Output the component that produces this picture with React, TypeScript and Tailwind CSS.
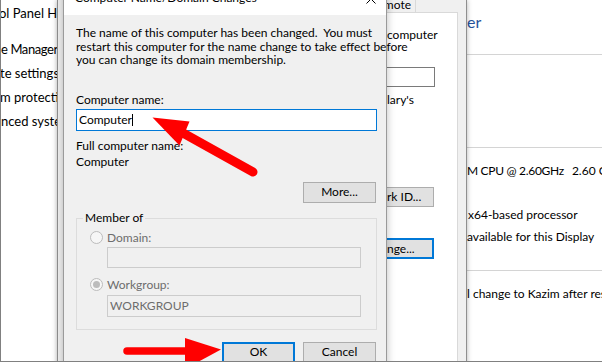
import React from "react";

function Radio({ checked = false }: { checked?: boolean }) {
  return (
    <span className="w-[13px] h-[13px] rounded-full border border-[#bcbcbc] bg-[#f6f6f6] flex items-center justify-center shrink-0">
      {checked && <span className="w-[7px] h-[7px] rounded-full bg-[#bcbcbc]" />}
    </span>
  );
}

function Arrows() {
  return (
    <svg
      className="absolute inset-0 pointer-events-none"
      width="602"
      height="362"
      viewBox="0 0 602 362"
    >
      <line x1="183" y1="133" x2="253" y2="172" stroke="#ff0000" strokeWidth="9" strokeLinecap="round" />
      <polygon points="152.5,117.5 189.5,121.5 179.5,145.5" fill="#ff0000" />
      <line x1="127" y1="351" x2="190" y2="351" stroke="#ff0000" strokeWidth="7.5" strokeLinecap="round" />
      <polygon points="185,338 221,349.5 185,369" fill="#ff0000" />
    </svg>
  );
}

export default function App() {
  return (
    <div className="relative w-[602px] h-[362px] overflow-hidden bg-white font-['Lato',sans-serif] text-[12px] text-black">
      {/* Background System window: left nav */}
      <div className="absolute left-0 top-0 w-[90px] flex flex-col pt-[5px] text-[13px] leading-[16px] whitespace-nowrap">
        <div className="-ml-[1px]">ol Panel Home</div>
        <div className="mt-[20px] ml-[1px] tracking-[-0.4px]">e Manager</div>
        <div className="mt-[8px]">te settings</div>
        <div className="mt-[8px]">m protection</div>
        <div className="mt-[8px] ml-[1px]">nced system settings</div>
      </div>

      {/* Background System window: right pane */}
      <div className="absolute left-[467px] top-0 right-0 bottom-0 overflow-hidden flex flex-col pt-[12px] whitespace-nowrap">
        <div className="text-[16px] leading-[20px] text-[#26529b]">er</div>
        <div className="mt-[22px] h-px bg-[#d4d4d4]" />
        <div className="mt-[92px] h-px bg-[#d4d4d4]" />
        <div className="mt-[15px] leading-[16px] flex gap-[8px]">
          <span className="tracking-[-0.3px]">M CPU @ 2.60GHz</span>
          <span>2.60 GHz</span>
        </div>
        <div className="mt-[28px] leading-[16px] ml-[1px]">x64-based processor</div>
        <div className="mt-[6px] leading-[16px]">available for this Display</div>
        <div className="mt-[25px] h-px bg-[#d4d4d4]" />
        <div className="mt-[15px] leading-[16px]">l change to Kazim after restart</div>
      </div>

      {/* System Properties dialog (behind) */}
      <div className="absolute left-[57px] top-0 w-[410px] h-[380px] bg-[#f0f0f0] border-x border-[#8f8f8f] shadow-[0_0_5px_rgba(0,0,0,0.3)] flex flex-col">
        <div className="h-[12px] flex shrink-0">
          <div className="ml-[262px] w-[96px] h-[12px] bg-[#f0f0f0] border-r border-[#d9d9d9] flex items-end justify-end pr-[4px] leading-[14px] overflow-hidden">
            Remote
          </div>
        </div>
        <div className="mx-[8px] flex-1 bg-white border-t border-r border-[#d9d9d9] flex flex-col">
          <div className="ml-[314px] flex flex-col leading-[16px] whitespace-nowrap">
            <div className="mt-[14px] ml-[7px]">computer</div>
            <div className="mt-[24px] w-[55px] h-[20px] border border-[#7a7a7a] bg-white" />
            <div className="mt-[5px] ml-[7px]">lary's</div>
            <div className="mt-[79px] w-[54px] h-[20px] border border-[#adadad] bg-[#e1e1e1] flex items-center pl-[6px]">
              rk ID...
            </div>
            <div className="mt-[31px] w-[54px] h-[21px] border-2 border-[#0078d7] bg-[#e1e1e1] flex items-center pl-[5px]">
              nge...
            </div>
          </div>
        </div>
      </div>

      {/* Computer Name/Domain Changes dialog */}
      <div className="absolute left-[63px] top-[-16px] w-[324px] h-[400px] border border-[#9a9a9a] bg-[#f0f0f0] shadow-[0_0_8px_rgba(0,0,0,0.25)] flex flex-col">
        <div className="h-[30px] shrink-0 bg-white flex items-start pl-[11px] pt-[6px]">
          <span className="leading-[14px] whitespace-nowrap">Computer Name/Domain Changes</span>
          <svg className="ml-auto mr-[10px] mt-[3px]" width="10" height="10" viewBox="0 0 10 10">
            <path d="M0.5 0.5 L9.5 9.5 M9.5 0.5 L0.5 9.5" stroke="#000" strokeWidth="1" fill="none" />
          </svg>
        </div>
        <div className="flex-1 flex flex-col pl-[12px] pr-[9px] pt-[11px]">
          <div className="leading-[13.5px] whitespace-pre">
            <div>The name of this computer has been changed.  You must</div>
            <div>restart this computer for the name change to take effect before</div>
            <div>you can change its domain membership.</div>
          </div>
          <div className="mt-[25px] leading-[16px]">Computer name:</div>
          <div className="mt-[1px] h-[22px] border border-[#0078d7] bg-white flex items-center pl-[2px]">
            <span className="leading-[16px]">Computer</span>
            <span className="w-px h-[12px] bg-black" />
          </div>
          <div className="mt-[7px] leading-[16px]">Full computer name:</div>
          <div className="leading-[16px]">Computer</div>
          <div className="mt-[12px] self-end mr-[1px] w-[73px] h-[21px] border border-[#adadad] bg-[#e1e1e1] flex items-center justify-center">
            More...
          </div>
          <div className="relative mt-[15px] h-[112px] border border-[#dcdcdc] flex flex-col pl-[13px] pt-[11px]">
            <span className="absolute left-[6px] top-[-9px] px-[2px] bg-[#f0f0f0] leading-[16px]">Member of</span>
            <div className="flex items-center h-[16px] gap-[4px] text-[#6d6d6d]">
              <Radio />
              <span>Domain:</span>
            </div>
            <div className="ml-[17px] mt-[1px] w-[254px] h-[21px] border border-[#cccccc] bg-[#f0f0f0]" />
            <div className="flex items-center h-[16px] mt-[9px] gap-[4px] text-[#6d6d6d]">
              <Radio checked />
              <span>Workgroup:</span>
            </div>
            <div className="ml-[17px] mt-[2px] w-[254px] h-[22px] border border-[#cccccc] bg-[#f0f0f0] flex items-center pl-[2px] text-[#6d6d6d]">
              WORKGROUP
            </div>
          </div>
          <div className="mt-[12px] mr-[1px] flex justify-end gap-[8px]">
            <div className="w-[73px] h-[21px] border-2 border-[#0078d7] bg-[#e1e1e1] flex items-center justify-center">
              OK
            </div>
            <div className="w-[73px] h-[21px] border border-[#adadad] bg-[#e1e1e1] flex items-center justify-center">
              Cancel
            </div>
          </div>
        </div>
      </div>

      <Arrows />

      <div className="absolute inset-0 border-l border-b border-[#808080] pointer-events-none" />
    </div>
  );
}
